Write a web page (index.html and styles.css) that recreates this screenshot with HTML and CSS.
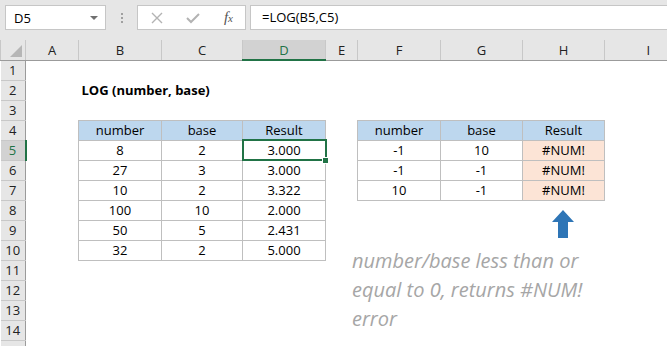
FILE: index.html
```html
<!DOCTYPE html>
<html lang="en">
<head>
    <meta charset="UTF-8">
    <title>LOG function</title>
    <link rel="stylesheet" href="styles.css">
</head>
<body>
    <div class="app">
        <div class="formula-bar">
            <div class="name-box">
                <span>D5</span>
                <span class="drop"></span>
            </div>
            <div class="grip">
                <i></i><i></i><i></i>
            </div>
            <div class="fx-box">
                <svg width="12" height="12" viewBox="0 0 12 12"><path d="M1 1 L11 11 M11 1 L1 11" stroke="#b3b3b3" stroke-width="1.4" fill="none"/></svg>
                <svg width="14" height="12" viewBox="0 0 14 12"><path d="M1 6 L5 10 L13 2" stroke="#b3b3b3" stroke-width="2" fill="none"/></svg>
                <span class="fx">f<small>x</small></span>
            </div>
            <div class="formula">=LOG(B5,C5)</div>
        </div>

        <table class="sheet">
            <colgroup>
                <col class="c-rh"><col class="c-a"><col class="c-b"><col class="c-c"><col class="c-d">
                <col class="c-e"><col class="c-f"><col class="c-g"><col class="c-h"><col class="c-i">
            </colgroup>
            <tr class="col-heads">
                <th class="corner"><span class="tri"></span></th>
                <th>A</th><th>B</th><th>C</th><th class="sel">D</th><th>E</th><th>F</th><th>G</th><th>H</th><th>I</th>
            </tr>
            <tr><th class="rh">1</th><td></td><td></td><td></td><td></td><td></td><td></td><td></td><td></td><td></td></tr>
            <tr><th class="rh">2</th><td></td><td class="title" colspan="3">LOG (number, base)</td><td></td><td></td><td></td><td></td><td></td></tr>
            <tr><th class="rh">3</th><td></td><td></td><td></td><td></td><td></td><td></td><td></td><td></td><td></td></tr>
            <tr>
                <th class="rh">4</th><td></td>
                <td class="box head">number</td><td class="box head">base</td><td class="box head">Result</td>
                <td></td>
                <td class="box head">number</td><td class="box head">base</td><td class="box head">Result</td>
                <td></td>
            </tr>
            <tr>
                <th class="rh sel">5</th><td></td>
                <td class="box">8</td><td class="box">2</td><td class="box active">3.000<span class="handle"></span></td>
                <td></td>
                <td class="box">-1</td><td class="box">10</td><td class="box err">#NUM!</td>
                <td></td>
            </tr>
            <tr>
                <th class="rh">6</th><td></td>
                <td class="box">27</td><td class="box">3</td><td class="box">3.000</td>
                <td></td>
                <td class="box">-1</td><td class="box">-1</td><td class="box err">#NUM!</td>
                <td></td>
            </tr>
            <tr>
                <th class="rh">7</th><td></td>
                <td class="box">10</td><td class="box">2</td><td class="box">3.322</td>
                <td></td>
                <td class="box">10</td><td class="box">-1</td><td class="box err">#NUM!</td>
                <td></td>
            </tr>
            <tr><th class="rh">8</th><td></td><td class="box">100</td><td class="box">10</td><td class="box">2.000</td><td></td><td></td><td></td><td></td><td></td></tr>
            <tr><th class="rh">9</th><td></td><td class="box">50</td><td class="box">5</td><td class="box">2.431</td><td></td><td></td><td></td><td></td><td></td></tr>
            <tr><th class="rh">10</th><td></td><td class="box">32</td><td class="box">2</td><td class="box">5.000</td><td></td><td></td><td></td><td></td><td></td></tr>
            <tr><th class="rh">11</th><td></td><td></td><td></td><td></td><td></td><td></td><td></td><td></td><td></td></tr>
            <tr><th class="rh">12</th><td></td><td></td><td></td><td></td><td></td><td></td><td></td><td></td><td></td></tr>
            <tr><th class="rh">13</th><td></td><td></td><td></td><td></td><td></td><td></td><td></td><td></td><td></td></tr>
            <tr><th class="rh">14</th><td></td><td></td><td></td><td></td><td></td><td></td><td></td><td></td><td></td></tr>
            <tr><th class="rh"></th><td></td><td></td><td></td><td></td><td></td><td></td><td></td><td></td><td></td></tr>
        </table>

        <!-- callout arrow + note floating on the sheet -->
        <svg class="arrow" width="22" height="28" viewBox="0 0 22 28">
            <path d="M11 0 L22 12 L16 12 L16 28 L6 28 L6 12 L0 12 Z" fill="#2e75b6"/>
        </svg>
        <div class="note">number/base less than or equal to 0, returns #NUM! error</div>
    </div>
</body>
</html>
```

FILE: styles.css
```css
body{
    margin: 0px;
    background: #ffffff;
    font-family: "Open Sans", "Liberation Sans", sans-serif;
}
.app{
    position: relative;
    width: 667px;
    height: 346px;
    overflow: hidden;
}
.formula-bar{
    height: 40px;
    background: #e6e6e6;
    display: flex;
    align-items: flex-start;
    padding-top: 5px;
    box-sizing: border-box;
}
.name-box{
    margin-left: 5px;
    width: 101px;
    height: 25px;
    box-sizing: border-box;
    background: #ffffff;
    border: 1px solid #c6c6c6;
    display: flex;
    align-items: center;
    justify-content: space-between;
    padding: 0px 7px 0px 8px;
    font-size: 13px;
    color: #000;
}
.drop{
    width: 0;
    height: 0;
    border-left: 4px solid transparent;
    border-right: 4px solid transparent;
    border-top: 4px solid #707070;
}
.grip{
    width: 31px;
    height: 25px;
    display: flex;
    flex-direction: column;
    align-items: center;
    justify-content: center;
    gap: 2px;
}
.grip i{
    display: block;
    width: 2px;
    height: 2px;
    background: #a0a0a0;
}
.fx-box{
    width: 109px;
    height: 25px;
    box-sizing: border-box;
    background: #ffffff;
    border: 1px solid #c6c6c6;
    display: flex;
    align-items: center;
    justify-content: space-between;
    padding: 0px 12px 0px 13px;
}
.fx{
    font-family: "Liberation Serif", serif;
    font-style: italic;
    font-size: 15px;
    color: #555;
}
.fx small{
    font-size: 11px;
}
.formula{
    margin-left: 4px;
    flex: 1;
    height: 25px;
    box-sizing: border-box;
    background: #ffffff;
    border: 1px solid #c6c6c6;
    border-right: none;
    padding-left: 11px;
    font-size: 13px;
    line-height: 23px;
    color: #000;
}

.sheet{
    border-collapse: collapse;
    table-layout: fixed;
    width: 691px;
    font-size: 13px;
}
.c-rh{ width: 25px; }
.c-a{ width: 53px; }
.c-b{ width: 83px; }
.c-c{ width: 81px; }
.c-d{ width: 83px; }
.c-e{ width: 32px; }
.c-f{ width: 83px; }
.c-g{ width: 82px; }
.c-h{ width: 82px; }
.c-i{ width: 87px; }
.sheet tr{
    height: 20px;
}
.sheet th, .sheet td{
    padding: 0px;
    height: 20px;
    box-sizing: border-box;
    font-weight: normal;
    text-align: center;
    white-space: nowrap;
    line-height: 18px;
}
.col-heads th{
    background: #e6e6e6;
    border-left: 1px solid #c8c8c8;
    border-bottom: 1px solid #9b9b9b;
    color: #222;
}
.col-heads th.sel{
    background: #d2d2d2;
    border-bottom: 2px solid #217346;
    color: #217346;
}
.corner{
    position: relative;
}
.tri{
    position: absolute;
    right: 3px;
    bottom: 3px;
    width: 0;
    height: 0;
    border-left: 12px solid transparent;
    border-bottom: 12px solid #b6b6b6;
}
.rh{
    background: #e6e6e6;
    border-bottom: 1px solid #c8c8c8;
    border-right: 1px solid #9b9b9b;
    color: #222;
}
.rh.sel{
    background: #d2d2d2;
    border-right: 2px solid #217346;
    color: #217346;
}
.sheet .title{
    text-align: left;
    font-weight: bold;
    padding-left: 3px;
    color: #000;
}
.box{
    border: 1px solid #bfbfbf;
    color: #000;
}
.box.head{
    background: #bdd7ee;
}
.box.err{
    background: #fce4d6;
}
.active{
    position: relative;
    outline: 2px solid #217346;
    outline-offset: -1px;
}
.handle{
    position: absolute;
    right: -4px;
    bottom: -4px;
    width: 5px;
    height: 5px;
    background: #217346;
    border: 1px solid #ffffff;
}
.arrow{
    position: absolute;
    left: 552px;
    top: 210px;
}
.note{
    position: absolute;
    left: 352px;
    top: 246px;
    width: 270px;
    font-style: italic;
    font-size: 20px;
    line-height: 29px;
    color: #a6a6a6;
}
```
